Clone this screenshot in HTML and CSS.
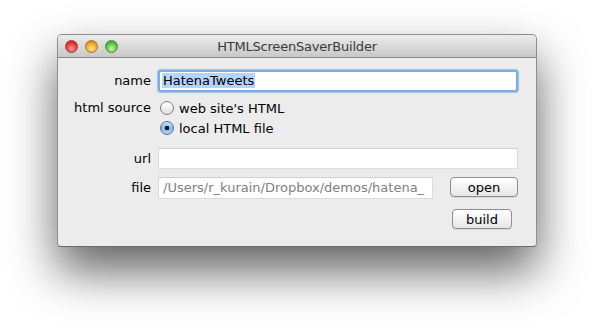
FILE: index.html
```html
<!DOCTYPE html>
<html lang="en">
<head>
    <meta charset="UTF-8">
    <title>HTMLScreenSaverBuilder</title>
    <link rel="stylesheet" href="styles.css">
</head>
<body>
    <div class="window">
        <div class="titlebar">
            <div class="lights">
                <span class="light red"></span>
                <span class="light yellow"></span>
                <span class="light green"></span>
            </div>
            <div class="title">HTMLScreenSaverBuilder</div>
        </div>
        <div class="content">
            <div class="row row-name">
                <label class="label">name</label>
                <div class="field focused"><span class="selected">HatenaTweets</span></div>
            </div>
            <div class="row row-source">
                <label class="label">html source</label>
                <div class="radios">
                    <div class="radio"><span class="circle"></span>web site's HTML</div>
                    <div class="radio"><span class="circle checked"></span>local HTML file</div>
                </div>
            </div>
            <div class="row row-url">
                <label class="label">url</label>
                <div class="field"></div>
            </div>
            <div class="row row-file">
                <label class="label">file</label>
                <div class="file-line">
                    <div class="field file-field">/Users/r_kurain/Dropbox/demos/hatena_</div>
                    <button class="btn open">open</button>
                </div>
            </div>
            <div class="row row-build">
                <button class="btn build">build</button>
            </div>
        </div>
    </div>
</body>
</html>
```

FILE: styles.css
```css
html {
    height: 100%;
}
body {
    margin: 0;
    min-height: 100%;
    box-sizing: border-box;
    padding: 34px 0 0 57px;
    background-color: #ffffff;
    font-family: "DejaVu Sans", sans-serif;
    font-size: 13px;
    color: #000;
}
.window {
    width: 480px;
    height: 213px;
    box-sizing: border-box;
    background-color: #ececec;
    border: 1px solid #8e8e8e;
    border-bottom-color: #6a6a6a;
    border-radius: 5px 5px 4px 4px;
    box-shadow: 0 24px 48px rgba(0, 0, 0, 0.62);
    overflow: hidden;
}
.titlebar {
    position: relative;
    height: 22px;
    background: linear-gradient(#ececec, #d6d6d6 60%, #c8c8c8);
    border-bottom: 1px solid #8a8a8a;
    display: flex;
    align-items: center;
    justify-content: center;
}
.lights {
    position: absolute;
    left: 7px;
    top: 5px;
    display: flex;
    gap: 7px;
}
.light {
    width: 13px;
    height: 13px;
    border-radius: 50%;
    box-sizing: border-box;
}
.red {
    background: radial-gradient(circle at 50% 70%, #ff9a9a, #e23b3b 55%, #a31a1a);
    border: 1px solid #9e3a3a;
}
.yellow {
    background: radial-gradient(circle at 50% 70%, #ffe38a, #efad26 55%, #b2700c);
    border: 1px solid #a7762a;
}
.green {
    background: radial-gradient(circle at 50% 70%, #c6f3a8, #5fc447 55%, #2e8a1e);
    border: 1px solid #4f8a3b;
}
.title {
    font-size: 13px;
    color: #3a3a3a;
    letter-spacing: -0.2px;
}
.content {
    padding: 12px 20px 0 0;
}
.row {
    display: grid;
    grid-template-columns: 93px 360px;
    column-gap: 7px;
}
.label {
    text-align: right;
    line-height: 22px;
}
.field {
    height: 21px;
    box-sizing: border-box;
    background-color: #ffffff;
    border: 1px solid #dcdcdc;
    border-top-color: #cfcfcf;
    padding: 0 4px;
    line-height: 19px;
    color: #808080;
    white-space: nowrap;
    overflow: hidden;
}
.field.focused {
    height: 22px;
    border: 2px solid #7aaee4;
    border-radius: 3px;
    box-shadow: 0 0 1px 1px rgba(90, 150, 220, 0.5);
    padding: 0 2px;
    line-height: 18px;
    color: #000;
}
.selected {
    background-color: #b5d5fe;
    padding: 0 1px;
}
.row-source {
    margin-top: 6px;
}
.row-source .label {
    line-height: 20px;
}
.radios {
    display: flex;
    flex-direction: column;
}
.radio {
    display: flex;
    align-items: center;
    height: 20px;
    gap: 5px;
    padding-left: 2px;
}
.circle {
    width: 14px;
    height: 14px;
    box-sizing: border-box;
    border-radius: 50%;
    border: 1px solid #7e7e7e;
    background: linear-gradient(#ffffff, #f0f0f0 50%, #dcdcdc);
}
.circle.checked {
    border-color: #4d6f9c;
    background: radial-gradient(circle, #1a1a1a 0, #1a1a1a 2px, transparent 2.6px),
        linear-gradient(#cfe3fb, #8cb8ee 50%, #a9d2ff);
}
.row-url {
    margin-top: 10px;
}
.row-file {
    margin-top: 7px;
}
.file-line {
    display: flex;
    gap: 17px;
    align-items: flex-start;
}
.file-field {
    width: 275px;
    height: 22px;
    line-height: 20px;
    font-size: 13px;
}
.btn {
    font-family: "DejaVu Sans", sans-serif;
    font-size: 13px;
    color: #000;
    height: 20px;
    box-sizing: border-box;
    padding: 0;
    background: linear-gradient(#ffffff, #f3f3f3 50%, #e6e6e6);
    border: 1px solid #8f8f8f;
    border-radius: 4px;
    box-shadow: 0 1px 0 rgba(0, 0, 0, 0.08);
    line-height: 17px;
}
.open {
    width: 68px;
}
.row-build {
    margin-top: 10px;
    display: flex;
    justify-content: flex-end;
    padding-right: 4px;
}
.build {
    width: 60px;
}
```
